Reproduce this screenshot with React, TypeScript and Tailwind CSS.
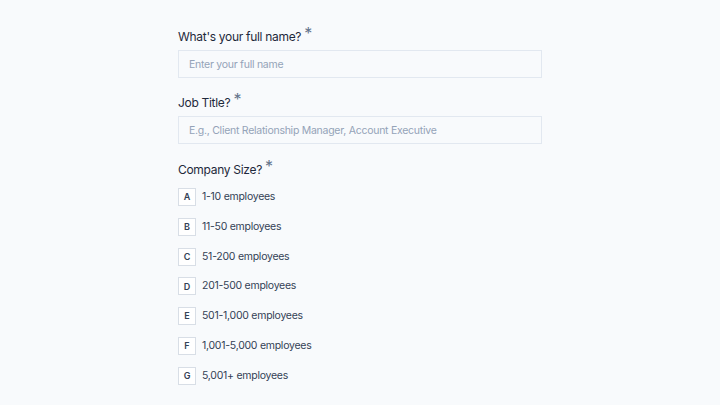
const options = [
  { key: "A", label: "1-10 employees" },
  { key: "B", label: "11-50 employees" },
  { key: "C", label: "51-200 employees" },
  { key: "D", label: "201-500 employees" },
  { key: "E", label: "501-1,000 employees" },
  { key: "F", label: "1,001-5,000 employees" },
  { key: "G", label: "5,001+ employees" },
];

const Label = ({ text }: { text: string }) => (
  <div className="flex items-start text-[12px] leading-[16px] tracking-tight text-[#1e293b]">
    <span>{text}</span>
    <span className="ml-[3px] -mt-[4px] text-[16px] leading-[16px] text-[#64748b]">*</span>
  </div>
);

export default function App() {
  return (
    <div className="min-h-screen w-full bg-[#f8fafc] font-['Inter',sans-serif]">
      <div className="mx-auto w-[364px] pt-[29px]">
        {/* Full name */}
        <Label text="What's your full name?" />
        <input
          type="text"
          placeholder="Enter your full name"
          className="mt-[5px] h-[28px] w-full border border-[#e2e8f0] bg-[#f8fafc] px-[10px] text-[10.5px] tracking-tight text-[#1e293b] placeholder:text-[#94a3b8] outline-none"
        />

        {/* Job title */}
        <div className="mt-[17px]">
          <Label text="Job Title?" />
        </div>
        <input
          type="text"
          placeholder="E.g., Client Relationship Manager, Account Executive"
          className="mt-[5px] h-[28px] w-full border border-[#e2e8f0] bg-[#f8fafc] px-[10px] text-[10.5px] tracking-tight text-[#1e293b] placeholder:text-[#94a3b8] outline-none"
        />

        {/* Company size */}
        <div className="mt-[18px]">
          <Label text="Company Size?" />
        </div>
        <div className="mt-[10px] flex flex-col gap-[11.75px]">
          {options.map((o) => (
            <div key={o.key} className="flex h-[18px] items-center gap-[6px]">
              <div className="flex h-[18px] w-[18px] items-center justify-center border border-[#d8dee6] bg-white text-[9px] font-semibold text-[#334155]">
                {o.key}
              </div>
              <span className="text-[10.5px] tracking-tight text-[#334155]">{o.label}</span>
            </div>
          ))}
        </div>

        <div className="mt-[26px]">
          <Label text="Industry?" />
        </div>
      </div>
    </div>
  );
}
